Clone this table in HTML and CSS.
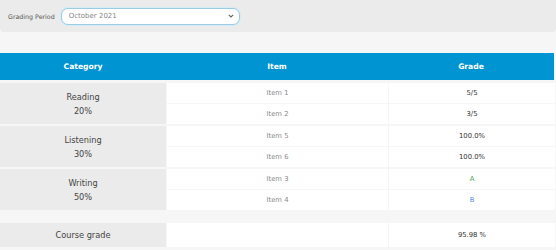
FILE: index.html
```html
<!DOCTYPE html>
<html>
<head>
<meta charset="utf-8">
<link rel="stylesheet" href="styles.css">
</head>
<body>
<div class="page">
  <div class="filter">
    <label class="filter-label">Grading Period</label>
    <div class="select">
      <span class="select-value">October 2021</span>
      <svg class="chev" width="6" height="4" viewBox="0 0 6 4"><path d="M0.8 0.8 L3 3 L5.2 0.8" fill="none" stroke="#666" stroke-width="1.1"/></svg>
    </div>
  </div>
  <div class="grades">
    <div class="head">
      <div>Category</div><div>Item</div><div>Grade</div>
    </div>
    <div class="group">
      <div class="cat"><div>Reading</div><div>20%</div></div>
      <div class="item">Item 1</div><div class="grade">5/5</div>
      <div class="item">Item 2</div><div class="grade">3/5</div>
    </div>
    <div class="group">
      <div class="cat"><div>Listening</div><div>30%</div></div>
      <div class="item">Item 5</div><div class="grade">100.0%</div>
      <div class="item">Item 6</div><div class="grade">100.0%</div>
    </div>
    <div class="group">
      <div class="cat"><div>Writing</div><div>50%</div></div>
      <div class="item">Item 3</div><div class="grade green">A</div>
      <div class="item">Item 4</div><div class="grade blue">B</div>
    </div>
    <div class="total">
      <div class="cat">Course grade</div>
      <div class="item"></div><div class="grade">95.98 %</div>
    </div>
  </div>
</div>
</body>
</html>
```
FILE: styles.css
```css
html, body {
  margin: 0;
  padding: 0;
  background: #f6f6f6;
  font-family: "DejaVu Sans", sans-serif;
}
.page {
  width: 556px;
}
.filter {
  height: 32px;
  background: #ebebeb;
  border-radius: 0 0 4px 4px;
  display: flex;
  align-items: center;
  padding-left: 8px;
  box-sizing: border-box;
}
.filter-label {
  font-size: 6.3px;
  color: #555;
  margin-right: 6px;
}
.select {
  width: 179px;
  height: 17px;
  box-sizing: border-box;
  background: #fff;
  border: 1px solid #9ccbe4;
  border-radius: 7px;
  box-shadow: 0 0 0 1px #d6ebf5;
  display: flex;
  align-items: center;
  justify-content: space-between;
  padding: 0 5px 0 7px;
}
.select-value {
  font-size: 7px;
  color: #888;
}
.grades {
  width: 554px;
  margin-top: 21px;
  display: flex;
  flex-direction: column;
}
.head {
  display: grid;
  grid-template-columns: 166px 222px 166px;
  height: 27px;
  background: #0094d2;
  color: #fff;
  font-size: 7.6px;
  font-weight: bold;
  align-items: center;
  text-align: center;
  margin-bottom: 3px;
}
.group {
  display: grid;
  grid-template-columns: 166px 221px 166px;
  grid-template-rows: 20px 20px;
  column-gap: 1px;
  row-gap: 1px;
  margin-bottom: 2px;
}
.group .cat {
  grid-row: 1 / span 2;
  grid-column: 1;
  flex-direction: column;
  line-height: 14px;
}
.cat, .item, .grade {
  display: flex;
  align-items: center;
  justify-content: center;
}
.cat {
  background: #ebebeb;
  color: #444;
  font-size: 8.2px;
}
.item {
  background: #fff;
  color: #888;
  font-size: 6.8px;
}
.grade {
  background: #fff;
  color: #333;
  font-size: 6.8px;
}
.green { color: #4caf50; }
.blue { color: #5b8fdc; }
.total {
  display: grid;
  grid-template-columns: 166px 221px 166px;
  height: 24px;
  column-gap: 1px;
  margin-top: 11px;
}
.total .item { background: #fff; }
```
